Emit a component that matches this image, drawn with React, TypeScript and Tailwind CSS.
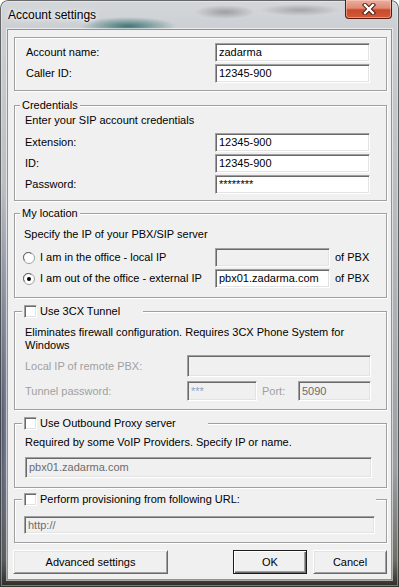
import React from "react";

const SUNKEN =
  "border border-t-[#a0a0a0] border-l-[#a0a0a0] border-r-white border-b-white shadow-[inset_1px_1px_0_#696969,inset_-1px_-1px_0_#e3e3e3]";

function Edit({
  value,
  className,
  disabled,
  textClass,
}: {
  value?: string;
  className: string;
  disabled?: boolean;
  textClass?: string;
}) {
  return (
    <div
      className={`flex items-center pl-[3px] ${SUNKEN} ${disabled ? "bg-[#f0f0f0]" : "bg-white"} ${className}`}
    >
      <span
        className={`leading-[13px] whitespace-nowrap ${textClass ?? (disabled ? "text-[#6d6d6d]" : "text-black")}`}
      >
        {value}
      </span>
    </div>
  );
}

function Check() {
  return <div className={`w-[13px] h-[13px] shrink-0 bg-white ${SUNKEN}`} />;
}

function Radio({ checked }: { checked?: boolean }) {
  return (
    <svg width="12" height="12" viewBox="0 0 12 12" className="shrink-0">
      <circle cx="6" cy="6" r="5.5" fill="#fff" stroke="#a0a0a0" />
      <path d="M1.8 8.5 A4.6 4.6 0 0 1 8.5 1.8" fill="none" stroke="#696969" strokeWidth="1" />
      {checked && <circle cx="6" cy="6" r="2" fill="#000" />}
    </svg>
  );
}

function Group({
  className,
  legend,
  children,
}: {
  className: string;
  legend?: React.ReactNode;
  children: React.ReactNode;
}) {
  return (
    <div
      className={`relative w-[373px] ml-[6px] border border-[#a0a0a0] shadow-[inset_1px_1px_0_#fff,1px_1px_0_#fff] ${className}`}
    >
      {legend}
      {children}
    </div>
  );
}

function TextLegend({ text }: { text: string }) {
  return (
    <div className="absolute top-[-7px] left-[5px] px-[2px] h-[13px] leading-[13px] bg-[#f0f0f0]">
      {text}
    </div>
  );
}

function CheckLegend({ text, w }: { text: string; w: string }) {
  return (
    <div
      className={`absolute top-[-7px] left-[7px] h-[13px] pl-[2px] flex items-center gap-[3px] bg-[#f0f0f0] ${w}`}
    >
      <Check />
      <span className="leading-[13px] whitespace-nowrap">{text}</span>
    </div>
  );
}

function Row({
  label,
  value,
  labelW,
}: {
  label: string;
  value: string;
  labelW: string;
}) {
  return (
    <div className="flex items-center h-[19px]">
      <span className={`${labelW} leading-[13px]`}>{label}</span>
      <Edit value={value} className="w-[155px] h-[19px]" />
    </div>
  );
}

function Button({ label, className, def }: { label: string; className: string; def?: boolean }) {
  return (
    <div
      className={`flex items-center justify-center h-[24px] bg-[#f0f0f0] border ${
        def
          ? "border-[#1b1b1b] shadow-[inset_1px_1px_0_#fff,inset_-1px_-1px_0_#696969,inset_-2px_-2px_0_#a0a0a0]"
          : "border-t-white border-l-white border-r-[#696969] border-b-[#696969] shadow-[inset_1px_1px_0_#e3e3e3,inset_-1px_-1px_0_#a0a0a0]"
      } ${className}`}
    >
      <span className="leading-[13px]">{label}</span>
    </div>
  );
}

export default function App() {
  return (
    <div className="w-[399px] h-[587px] overflow-hidden font-['Liberation_Sans',Arial,sans-serif] text-[11px] text-black">
      <div className="w-[399px] h-[587px] rounded-t-[8px] flex flex-col shadow-[inset_0_0_0_1px_rgba(0,0,0,0.55),inset_0_0_0_2px_rgba(255,255,255,0.35)] bg-[radial-gradient(ellipse_48px_9px_at_128px_26px,rgba(30,95,95,0.8),transparent),radial-gradient(ellipse_30px_7px_at_225px_12px,rgba(60,60,60,0.35),transparent),radial-gradient(ellipse_40px_6px_at_300px_10px,rgba(60,60,60,0.3),transparent),radial-gradient(ellipse_8px_250px_at_2px_430px,rgba(20,30,70,0.55),transparent),linear-gradient(to_bottom,#d4d7da_0px,#cbcfd3_30px,#b3b8bd_250px,#9a9fa4_470px,#6f6f66_560px,#2e2e26_587px)]">
        {/* title bar */}
        <div className="h-[29px] flex justify-between items-start shrink-0">
          <span className="pl-[8px] pt-[8px] leading-[14px] text-[12px] text-black [text-shadow:0_0_8px_#fff,0_0_4px_#fff]">
            Account settings
          </span>
          <div className="mr-[7px] w-[47px] h-[19px] rounded-b-[4px] border border-t-0 border-[#5a1a10] bg-[linear-gradient(to_bottom,#ecae9f_0%,#e08a74_45%,#c94a2c_55%,#d25a36_100%)] shadow-[inset_0_0_0_1px_rgba(255,220,210,0.45)] flex items-center justify-center">
            <svg width="14" height="12" viewBox="0 0 14 12">
              <path d="M3 2 L11 10 M11 2 L3 10" stroke="#4a1a12" strokeWidth="4.4" strokeLinecap="square" />
              <path d="M3 2 L11 10 M11 2 L3 10" stroke="#fff" strokeWidth="2.4" strokeLinecap="square" />
            </svg>
          </div>
        </div>

        {/* client */}
        <div className="mx-[7px] h-[551px] shrink-0 border border-[#8b949c] bg-[#f0f0f0] flex flex-col shadow-[0_0_0_1px_rgba(255,255,255,0.55)]">
          {/* account */}
          <Group className="mt-[7px] pt-[5px] pb-[7px] pl-[11px]">
            <div className="flex flex-col gap-[2px]">
              <Row label="Account name:" value="zadarma" labelW="w-[189px]" />
              <Row label="Caller ID:" value="12345-900" labelW="w-[189px]" />
            </div>
          </Group>

          {/* credentials */}
          <Group className="mt-[14px] pt-[8px] pb-[6px] pl-[10px]" legend={<TextLegend text="Credentials" />}>
            <div className="leading-[13px]">Enter your SIP account credentials</div>
            <div className="mt-[6px] flex flex-col gap-[2px]">
              <Row label="Extension:" value="12345-900" labelW="w-[190px]" />
              <Row label="ID:" value="12345-900" labelW="w-[190px]" />
              <Row label="Password:" value="********" labelW="w-[190px]" />
            </div>
          </Group>

          {/* my location */}
          <Group className="mt-[12px] pt-[14px] pb-[9px] pl-[9px]" legend={<TextLegend text="My location" />}>
            <div className="leading-[13px]">Specify the IP of your PBX/SIP server</div>
            <div className="mt-[7px] flex flex-col gap-[2px] -ml-[1px]">
              <div className="flex items-center h-[19px]">
                <div className="w-[192px] flex items-center gap-[5px]">
                  <Radio />
                  <span className="leading-[13px]">I am in the office - local IP</span>
                </div>
                <Edit value="" className="w-[115px] h-[19px]" disabled />
                <span className="ml-[5px] leading-[13px]">of PBX</span>
              </div>
              <div className="flex items-center h-[19px]">
                <div className="w-[192px] flex items-center gap-[5px]">
                  <Radio checked />
                  <span className="leading-[13px]">I am out of the office - external IP</span>
                </div>
                <Edit value="pbx01.zadarma.com" className="w-[115px] h-[19px]" />
                <span className="ml-[5px] leading-[13px]">of PBX</span>
              </div>
            </div>
          </Group>

          {/* 3CX tunnel */}
          <Group
            className="mt-[13px] pt-[14px] pb-[8px] pl-[10px]"
            legend={<CheckLegend text="Use 3CX Tunnel" w="w-[121px]" />}
          >
            <div className="leading-[13px]">
              Eliminates firewall configuration. Requires 3CX Phone System for
              <br />
              Windows
            </div>
            <div className="mt-[3px] flex items-center h-[22px]">
              <span className="w-[162px] leading-[13px] text-[#a0a0a0]">Local IP of remote PBX:</span>
              <Edit value="" className="w-[184px] h-[22px]" disabled />
            </div>
            <div className="mt-[4px] flex items-center h-[20px]">
              <span className="w-[162px] leading-[13px] text-[#a0a0a0]">Tunnel password:</span>
              <Edit value="***" className="w-[70px] h-[20px]" disabled textClass="text-[#8fa4c2]" />
              <span className="w-[41px] pl-[5px] leading-[13px] text-[#a0a0a0]">Port:</span>
              <Edit value="5090" className="w-[73px] h-[20px]" disabled />
            </div>
          </Group>

          {/* outbound proxy */}
          <Group
            className="mt-[13px] pt-[12px] pb-[9px] pl-[10px]"
            legend={<CheckLegend text="Use Outbound Proxy server" w="w-[186px]" />}
          >
            <div className="leading-[13px]">Required by some VoIP Providers. Specify IP or name.</div>
            <Edit value="pbx01.zadarma.com" className="mt-[8px] w-[347px] h-[21px]" disabled />
          </Group>

          {/* provisioning */}
          <Group
            className="mt-[11px] pt-[16px] pb-[8px] pl-[9px]"
            legend={<CheckLegend text="Perform provisioning from following URL:" w="w-[354px]" />}
          >
            <Edit value="http://" className="w-[351px] h-[18px]" disabled />
          </Group>

          {/* buttons */}
          <div className="mt-[7px] flex pl-[5px] pr-[4px]">
            <Button label="Advanced settings" className="w-[155px]" />
            <Button label="OK" className="ml-auto w-[74px]" def />
            <Button label="Cancel" className="ml-[6px] w-[74px]" />
          </div>
        </div>
      </div>
    </div>
  );
}
